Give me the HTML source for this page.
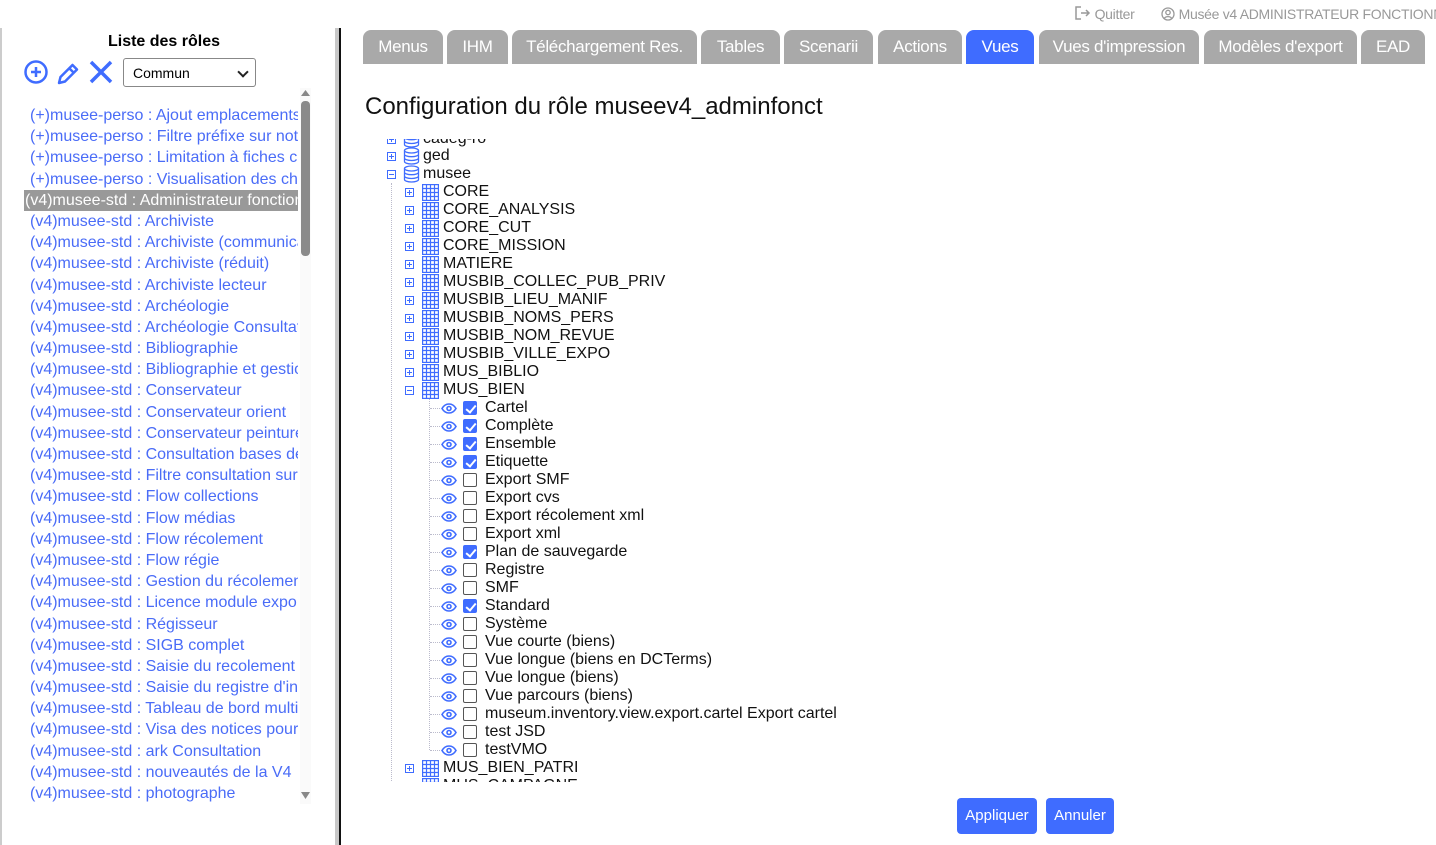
<!DOCTYPE html>
<html><head><meta charset="utf-8"><style>
*{box-sizing:border-box;margin:0;padding:0}
body{width:1436px;height:845px;overflow:hidden;background:#fff;font-family:"Liberation Sans",Arial,sans-serif;position:relative}
.lb{position:absolute;left:0;top:28px;width:2px;height:817px;background:#ccc}
.div1{position:absolute;left:335px;top:28px;width:4px;height:817px;background:#c8c8c8}
.div2{position:absolute;left:339px;top:28px;width:2px;height:817px;background:#111}
h3{position:absolute;left:0;width:328px;top:33px;text-align:center;font-size:16px;font-weight:bold}
.sel{position:absolute;left:123px;top:58px;width:133px;height:29px;border:1px solid #888;border-radius:3px;font-size:14px;padding:6px 9px;background:#fff}
.sel:after{content:"";position:absolute;right:8px;top:9px;width:6px;height:6px;border-right:2px solid #222;border-bottom:2px solid #222;transform:rotate(45deg)}
.roles{position:absolute;left:24px;top:105px;width:274px;overflow:hidden;font-size:16px;color:#4a6cf7;white-space:nowrap}
.roles div{height:21.2px;line-height:22px;padding-left:6px}
.roles .on{background:#999;color:#fff;padding-left:1px}
.sb{position:absolute;left:300px;top:88px;width:11px;height:716px;background:#fafafa}
.thumb{position:absolute;left:301px;top:101px;width:9px;height:155px;background:#8a8a8a;border-radius:4px}
.top{position:absolute;top:6px;font-size:14px;color:#999;white-space:nowrap;letter-spacing:-0.3px}
.tabs{position:absolute;left:363px;top:30px;height:34px}
.tab{position:absolute;top:0;height:34px;background:#a9a9a9;color:#fff;border-radius:8px 8px 0 0;font-size:17px;text-align:center;line-height:34px;letter-spacing:-0.3px;white-space:nowrap}
.tab.a{background:#3f6cff}
h1{position:absolute;left:365px;top:93px;font-size:24px;font-weight:normal;color:#111}
.tree{position:absolute;left:380px;top:139px;width:600px;height:643px;overflow:hidden;font-size:16px;color:#111}
.inner{position:absolute;left:0;top:-7px;width:600px;height:700px}
.r{position:absolute;height:18px;line-height:18px;white-space:nowrap}
.ex{position:absolute;width:9px;height:9px;border:1px solid #3f6cff;top:5px}
.ex:before{content:"";position:absolute;left:1px;top:3px;width:5px;height:1px;background:#3f6cff}
.ex.p:after{content:"";position:absolute;left:3px;top:1px;width:1px;height:5px;background:#3f6cff}
.cb{position:absolute;top:2px;width:14px;height:14px;border:1px solid #555;border-radius:2px;background:#fff}
.cb.c{background:#3f6cff;border-color:#3f6cff}
.cb.c:after{content:"";position:absolute;left:4px;top:1px;width:4px;height:8px;border-right:2px solid #fff;border-bottom:2px solid #fff;transform:rotate(40deg)}
.vl{position:absolute;border-left:1px dotted #bbc}
.btn{position:absolute;top:798px;height:36px;background:#3f6cff;color:#fff;font-size:15px;border-radius:4px;text-align:center;line-height:36px}
</style></head><body>
<div class="lb"></div><div class="div1"></div><div class="div2"></div>
<h3>Liste des rôles</h3>
<svg style="position:absolute;left:23px;top:59px" width="95" height="28" viewBox="0 0 95 28">
<circle cx="13" cy="13" r="10.5" fill="none" stroke="#3f6cff" stroke-width="2.5"/>
<path d="M13 8v10M8 13h10" stroke="#3f6cff" stroke-width="2.5"/>
<path d="M36 24l1.5-6 12-12 4.5 4.5-12 12z M46 9l4.5 4.5" fill="none" stroke="#3f6cff" stroke-width="2.5" stroke-linejoin="round"/>
<path d="M68 3l20 20M88 3l-20 20" stroke="#3f6cff" stroke-width="3.5"/>
</svg>
<div class="sel">Commun</div>
<div class="roles">
<div>(+)musee-perso : Ajout emplacements</div>
<div>(+)musee-perso : Filtre préfixe sur notices</div>
<div>(+)musee-perso : Limitation à fiches créées</div>
<div>(+)musee-perso : Visualisation des champs</div>
<div class="on">(v4)musee-std : Administrateur fonctionnel</div>
<div>(v4)musee-std : Archiviste</div>
<div>(v4)musee-std : Archiviste (communication)</div>
<div>(v4)musee-std : Archiviste (réduit)</div>
<div>(v4)musee-std : Archiviste lecteur</div>
<div>(v4)musee-std : Archéologie</div>
<div>(v4)musee-std : Archéologie Consultation</div>
<div>(v4)musee-std : Bibliographie</div>
<div>(v4)musee-std : Bibliographie et gestion</div>
<div>(v4)musee-std : Conservateur</div>
<div>(v4)musee-std : Conservateur orient</div>
<div>(v4)musee-std : Conservateur peinture</div>
<div>(v4)musee-std : Consultation bases de</div>
<div>(v4)musee-std : Filtre consultation sur</div>
<div>(v4)musee-std : Flow collections</div>
<div>(v4)musee-std : Flow médias</div>
<div>(v4)musee-std : Flow récolement</div>
<div>(v4)musee-std : Flow régie</div>
<div>(v4)musee-std : Gestion du récolement</div>
<div>(v4)musee-std : Licence module expo</div>
<div>(v4)musee-std : Régisseur</div>
<div>(v4)musee-std : SIGB complet</div>
<div>(v4)musee-std : Saisie du recolement</div>
<div>(v4)musee-std : Saisie du registre d'inventaire</div>
<div>(v4)musee-std : Tableau de bord multi</div>
<div>(v4)musee-std : Visa des notices pour</div>
<div>(v4)musee-std : ark Consultation</div>
<div>(v4)musee-std : nouveautés de la V4</div>
<div>(v4)musee-std : photographe</div>
</div>
<div class="sb"></div><div class="thumb"></div>
<svg style="position:absolute;left:300px;top:88px" width="11" height="716"><path d="M1 8h9l-4.5-6z" fill="#888"/><path d="M1 704h9l-4.5 7z" fill="#888"/></svg>

<div class="top" style="left:1075px">
<svg width="16" height="14" viewBox="0 0 16 14" style="vertical-align:-1px"><path d="M6 1H1v12h5M6 7h8M11 4l3 3-3 3" fill="none" stroke="#999" stroke-width="1.5"/></svg> Quitter</div>
<div class="top" style="left:1161px"><svg width="14" height="14" viewBox="0 0 14 14" style="vertical-align:-2px"><circle cx="7" cy="7" r="6" fill="none" stroke="#999" stroke-width="1.3"/><circle cx="7" cy="5.5" r="2.2" fill="none" stroke="#999" stroke-width="1.3"/><path d="M3 11.5c2-2.5 6-2.5 8 0" fill="none" stroke="#999" stroke-width="1.3"/></svg> Musée v4 ADMINISTRATEUR FONCTIONN</div>

<div class="tabs">
<div class="tab" style="left:0;width:80px">Menus</div>
<div class="tab" style="left:84px;width:61px">IHM</div>
<div class="tab" style="left:149px;width:185px">Téléchargement Res.</div>
<div class="tab" style="left:338px;width:79px">Tables</div>
<div class="tab" style="left:421px;width:89px">Scenarii</div>
<div class="tab" style="left:515px;width:84px">Actions</div>
<div class="tab a" style="left:603px;width:68px">Vues</div>
<div class="tab" style="left:676px;width:160px">Vues d'impression</div>
<div class="tab" style="left:841px;width:153px">Modèles d'export</div>
<div class="tab" style="left:998px;width:64px">EAD</div>
</div>
<h1>Configuration du rôle museev4_adminfonct</h1>

<div class="tree"><div class="inner" id="t"></div></div>
<div class="btn" style="left:957px;width:80px">Appliquer</div>
<div class="btn" style="left:1046px;width:68px">Annuler</div>
<script>
var t=document.getElementById('t'),h='';
var db='<svg style="position:absolute;left:23px;top:0" width="17" height="18" viewBox="0 0 17 18"><g fill="none" stroke="#3f6cff" stroke-width="1.3"><ellipse cx="8.5" cy="3.5" rx="7" ry="2.5"/><path d="M1.5 3.5v11c0 1.4 3.1 2.5 7 2.5s7-1.1 7-2.5v-11M1.5 7.2c0 1.4 3.1 2.5 7 2.5s7-1.1 7-2.5M1.5 11c0 1.4 3.1 2.5 7 2.5s7-1.1 7-2.5"/></g></svg>';
var tb='<svg style="position:absolute;left:42px;top:1px" width="17" height="17" viewBox="0 0 17 17"><g fill="none" stroke="#3f6cff" stroke-width="1.2"><rect x=".6" y=".6" width="15.8" height="15.8"/><path d="M.6 4.5h15.8M.6 8.5h15.8M.6 12.5h15.8M4.5.6v15.8M8.5.6v15.8M12.5.6v15.8"/></g></svg>';
var eye='<svg style="position:absolute;left:61px;top:4px" width="16" height="11" viewBox="0 0 16 11"><g fill="none" stroke="#3f6cff" stroke-width="1.6"><path d="M1 5.5C3 2 5.5 1 8 1s5 1 7 4.5C13 9 10.5 10 8 10S3 9 1 5.5z"/><circle cx="8" cy="5.5" r="2"/></g></svg>';
function row(y,html){h+='<div class="r" style="left:0;top:'+y+'px;width:600px">'+html+'</div>';}
row(-2,'<div class="ex p" style="left:7px"></div>'+db+'<span style="position:absolute;left:43px">cadeg-ro</span>');
row(15,'<div class="ex p" style="left:7px"></div>'+db+'<span style="position:absolute;left:43px">ged</span>');
row(33,'<div class="ex" style="left:7px"></div>'+db+'<span style="position:absolute;left:43px">musee</span>');
h+='<div class="vl" style="left:11px;top:51px;height:610px"></div>';
var tabs=['CORE','CORE_ANALYSIS','CORE_CUT','CORE_MISSION','MATIERE','MUSBIB_COLLEC_PUB_PRIV','MUSBIB_LIEU_MANIF','MUSBIB_NOMS_PERS','MUSBIB_NOM_REVUE','MUSBIB_VILLE_EXPO','MUS_BIBLIO','MUS_BIEN'];
var y=51;
tabs.forEach(function(n,i){row(y,'<div class="ex '+(i==11?'':'p')+'" style="left:25px"></div>'+tb+'<span style="position:absolute;left:63px">'+n+'</span>');y+=18;});
var vs=[['Cartel',1],['Complète',1],['Ensemble',1],['Etiquette',1],['Export SMF',0],['Export cvs',0],['Export récolement xml',0],['Export xml',0],['Plan de sauvegarde',1],['Registre',0],['SMF',0],['Standard',1],['Système',0],['Vue courte (biens)',0],['Vue longue (biens en DCTerms)',0],['Vue longue (biens)',0],['Vue parcours (biens)',0],['museum.inventory.view.export.cartel Export cartel',0],['test JSD',0],['testVMO',0]];
h+='<div class="vl" style="left:49px;top:'+y+'px;height:'+(vs.length*18-9)+'px"></div>';
vs.forEach(function(v){row(y,'<div style="position:absolute;left:50px;top:9px;width:10px;border-top:1px dotted #bbc"></div>'+eye+'<div class="cb'+(v[1]?' c':'')+'" style="left:83px"></div><span style="position:absolute;left:105px">'+v[0]+'</span>');y+=18;});
row(y,'<div class="ex p" style="left:25px"></div>'+tb+'<span style="position:absolute;left:63px">MUS_BIEN_PATRI</span>');y+=18;
row(y,'<div class="ex p" style="left:25px"></div>'+tb+'<span style="position:absolute;left:63px">MUS_CAMPAGNE</span>');
t.innerHTML=h;
</script>
</body></html>
